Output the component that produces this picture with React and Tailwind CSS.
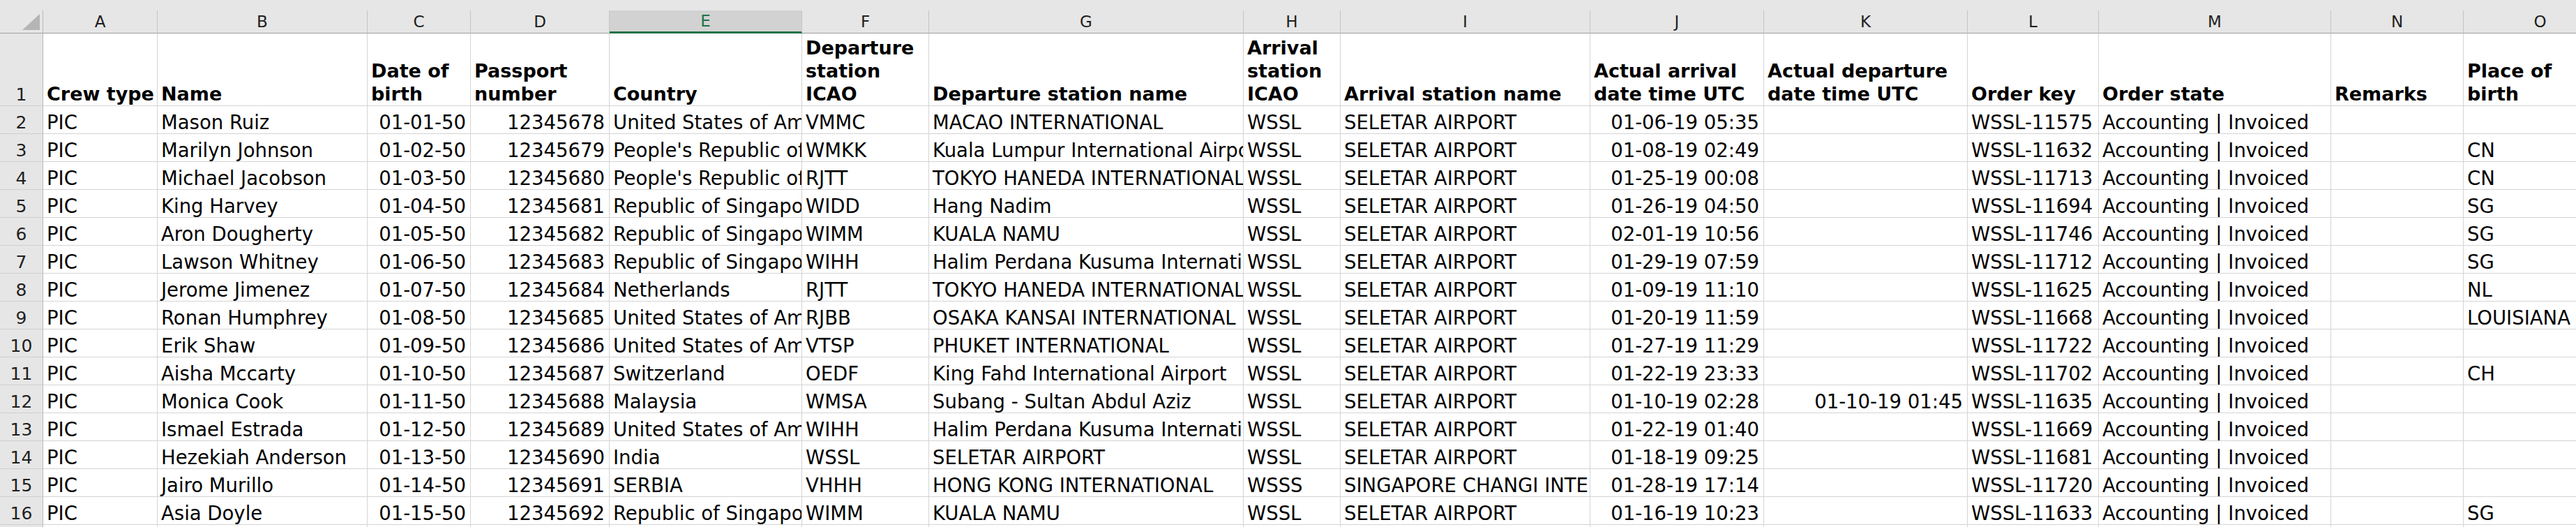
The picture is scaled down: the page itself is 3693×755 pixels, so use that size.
import clsx from "clsx";

const font = { fontFamily: '"DejaVu Sans", Verdana, sans-serif' };

// column letters, alignment of the data in each column
const columns = [
  { key: "A", align: "l" },
  { key: "B", align: "l" },
  { key: "C", align: "r" },
  { key: "D", align: "r" },
  { key: "E", align: "l", selected: true },
  { key: "F", align: "l" },
  { key: "G", align: "l" },
  { key: "H", align: "l" },
  { key: "I", align: "l" },
  { key: "J", align: "r" },
  { key: "K", align: "r" },
  { key: "L", align: "l" },
  { key: "M", align: "l" },
  { key: "N", align: "l" },
  { key: "O", align: "l" },
];

const headers = [
  ["Crew type"],
  ["Name"],
  ["Date of", "birth"],
  ["Passport", "number"],
  ["Country"],
  ["Departure", "station", "ICAO"],
  ["Departure station name"],
  ["Arrival", "station", "ICAO"],
  ["Arrival station name"],
  ["Actual arrival", "date time UTC"],
  ["Actual departure", "date time UTC"],
  ["Order key"],
  ["Order state"],
  ["Remarks"],
  ["Place of", "birth"],
];

const rows = [
  ["PIC", "Mason Ruiz", "01-01-50", "12345678", "United States of America", "VMMC", "MACAO INTERNATIONAL", "WSSL", "SELETAR AIRPORT", "01-06-19 05:35", "", "WSSL-11575", "Accounting | Invoiced", "", ""],
  ["PIC", "Marilyn Johnson", "01-02-50", "12345679", "People's Republic of China", "WMKK", "Kuala Lumpur International Airport", "WSSL", "SELETAR AIRPORT", "01-08-19 02:49", "", "WSSL-11632", "Accounting | Invoiced", "", "CN"],
  ["PIC", "Michael Jacobson", "01-03-50", "12345680", "People's Republic of China", "RJTT", "TOKYO HANEDA INTERNATIONAL", "WSSL", "SELETAR AIRPORT", "01-25-19 00:08", "", "WSSL-11713", "Accounting | Invoiced", "", "CN"],
  ["PIC", "King Harvey", "01-04-50", "12345681", "Republic of Singapore", "WIDD", "Hang Nadim", "WSSL", "SELETAR AIRPORT", "01-26-19 04:50", "", "WSSL-11694", "Accounting | Invoiced", "", "SG"],
  ["PIC", "Aron Dougherty", "01-05-50", "12345682", "Republic of Singapore", "WIMM", "KUALA NAMU", "WSSL", "SELETAR AIRPORT", "02-01-19 10:56", "", "WSSL-11746", "Accounting | Invoiced", "", "SG"],
  ["PIC", "Lawson Whitney", "01-06-50", "12345683", "Republic of Singapore", "WIHH", "Halim Perdana Kusuma International", "WSSL", "SELETAR AIRPORT", "01-29-19 07:59", "", "WSSL-11712", "Accounting | Invoiced", "", "SG"],
  ["PIC", "Jerome Jimenez", "01-07-50", "12345684", "Netherlands", "RJTT", "TOKYO HANEDA INTERNATIONAL", "WSSL", "SELETAR AIRPORT", "01-09-19 11:10", "", "WSSL-11625", "Accounting | Invoiced", "", "NL"],
  ["PIC", "Ronan Humphrey", "01-08-50", "12345685", "United States of America", "RJBB", "OSAKA KANSAI INTERNATIONAL", "WSSL", "SELETAR AIRPORT", "01-20-19 11:59", "", "WSSL-11668", "Accounting | Invoiced", "", "LOUISIANA"],
  ["PIC", "Erik Shaw", "01-09-50", "12345686", "United States of America", "VTSP", "PHUKET INTERNATIONAL", "WSSL", "SELETAR AIRPORT", "01-27-19 11:29", "", "WSSL-11722", "Accounting | Invoiced", "", ""],
  ["PIC", "Aisha Mccarty", "01-10-50", "12345687", "Switzerland", "OEDF", "King Fahd International Airport", "WSSL", "SELETAR AIRPORT", "01-22-19 23:33", "", "WSSL-11702", "Accounting | Invoiced", "", "CH"],
  ["PIC", "Monica Cook", "01-11-50", "12345688", "Malaysia", "WMSA", "Subang - Sultan Abdul Aziz", "WSSL", "SELETAR AIRPORT", "01-10-19 02:28", "01-10-19 01:45", "WSSL-11635", "Accounting | Invoiced", "", ""],
  ["PIC", "Ismael Estrada", "01-12-50", "12345689", "United States of America", "WIHH", "Halim Perdana Kusuma International", "WSSL", "SELETAR AIRPORT", "01-22-19 01:40", "", "WSSL-11669", "Accounting | Invoiced", "", ""],
  ["PIC", "Hezekiah Anderson", "01-13-50", "12345690", "India", "WSSL", "SELETAR AIRPORT", "WSSL", "SELETAR AIRPORT", "01-18-19 09:25", "", "WSSL-11681", "Accounting | Invoiced", "", ""],
  ["PIC", "Jairo Murillo", "01-14-50", "12345691", "SERBIA", "VHHH", "HONG KONG INTERNATIONAL", "WSSS", "SINGAPORE CHANGI INTERNATIONAL", "01-28-19 17:14", "", "WSSL-11720", "Accounting | Invoiced", "", ""],
  ["PIC", "Asia Doyle", "01-15-50", "12345692", "Republic of Singapore", "WIMM", "KUALA NAMU", "WSSL", "SELETAR AIRPORT", "01-16-19 10:23", "", "WSSL-11633", "Accounting | Invoiced", "", "SG"],
];

function RowHead({ children, tall }) {
  return (
    <div
      className={clsx(
        "flex items-end justify-center bg-[#e6e6e6] border-r border-b border-r-[#b8b8b8] border-b-[#cfcfcf] text-[25px] leading-[31px] text-[#1f1f1f]",
        tall ? "h-[104px]" : "h-[40px]"
      )}
    >
      {children}
    </div>
  );
}

function Cell({ children, align, tall, bold }) {
  return (
    <div
      className={clsx(
        "flex flex-col justify-end overflow-hidden whitespace-nowrap border-r border-b border-[#d4d4d4] text-black",
        tall ? "h-[104px] leading-[33px] text-[27px]" : "h-[40px] leading-[31px] text-[27.5px]",
        align === "r" ? "items-end pr-[6px]" : "items-start pl-[5px]",
        bold && "font-bold"
      )}
    >
      {children}
    </div>
  );
}

export default function App() {
  return (
    <div className="h-[755px] w-[3693px] overflow-hidden bg-white" style={font}>
      <div className="h-[15px] bg-[#e6e6e6]" />
      <div className="grid grid-cols-[62px_164px_301px_148px_199px_276px_182px_451px_139px_358px_249px_292px_188px_333px_190px_220px]">
        {/* corner */}
        <div className="flex h-[33px] items-end justify-end border-r border-b border-r-[#b8b8b8] border-b-[#9e9e9e] bg-[#e6e6e6] pr-[4px] pb-[4px]">
          <svg width="25" height="23" viewBox="0 0 25 23">
            <polygon points="25,0 25,23 0,23" fill="#b5b5b5" />
          </svg>
        </div>
        {columns.map((c) => (
          <div
            key={c.key}
            className={clsx(
              "flex h-[33px] items-center justify-center border-r border-r-[#c4c4c4] text-[23px]",
              c.selected
                ? "bg-[#d2d2d2] text-[#217346] border-b-[3px] border-b-[#217346]"
                : "bg-[#e6e6e6] text-[#1f1f1f] border-b border-b-[#9e9e9e]"
            )}
          >
            {c.key}
          </div>
        ))}

        <RowHead tall>1</RowHead>
        {headers.map((lines, i) => (
          <Cell key={i} tall bold align="l">
            {lines.map((l) => (
              <span key={l}>{l}</span>
            ))}
          </Cell>
        ))}

        {rows.map((r, ri) => (
          <div key={ri} className="contents">
            <RowHead>{ri + 2}</RowHead>
            {r.map((v, ci) => (
              <Cell key={ci} align={columns[ci].align}>
                {v}
              </Cell>
            ))}
          </div>
        ))}

        <RowHead>17</RowHead>
        {columns.map((c) => (
          <Cell key={c.key} align={c.align} />
        ))}
      </div>
    </div>
  );
}
